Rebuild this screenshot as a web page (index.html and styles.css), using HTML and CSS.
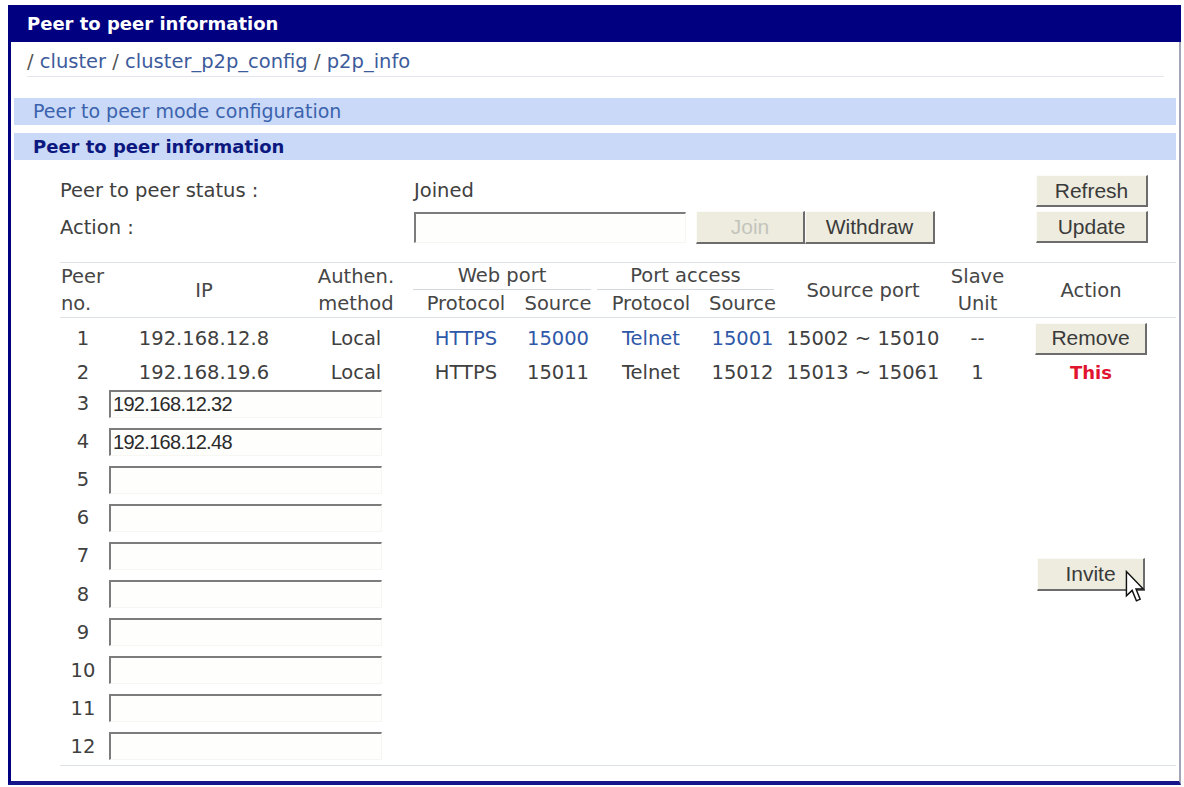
FILE: index.html
```html
<!DOCTYPE html>
<html lang="en">
<head>
  <meta charset="UTF-8">
  <meta name="viewport" content="width=device-width, initial-scale=1.0">
  <title>Peer to peer information</title>
  <link rel="stylesheet" href="styles.css">
</head>
<body>
  <div class="frame">
    <div class="titlebar">Peer to peer information</div>
    <div class="crumb">
      <span class="sep">/</span> <a href="#">cluster</a> <span class="sep">/</span> <a href="#">cluster_p2p_config</a> <span class="sep">/</span> <a href="#">p2p_info</a>
    </div>
    <div class="bar bar-link">Peer to peer mode configuration</div>
    <div class="bar bar-current">Peer to peer information</div>

    <div class="content">
      <div class="status">
        <div class="label">Peer to peer status :</div>
        <div class="value">Joined</div>
        <div class="side">
          <button class="btn side-btn">Refresh</button>
          <button class="btn side-btn">Update</button>
        </div>
        <div class="label">Action :</div>
        <div class="value action-row">
          <input type="text" class="field action-field">
          <button class="btn join" disabled>Join</button>
          <button class="btn withdraw">Withdraw</button>
        </div>
      </div>

      <table class="peers">
        <colgroup>
          <col class="c-no">
          <col class="c-ip">
          <col class="c-auth">
          <col class="c-wproto">
          <col class="c-wsrc">
          <col class="c-pproto">
          <col class="c-psrc">
          <col class="c-range">
          <col class="c-slave">
          <col class="c-action">
        </colgroup>
        <thead>
          <tr>
            <th rowspan="2" class="no-head">Peer<br>no.</th>
            <th rowspan="2">IP</th>
            <th rowspan="2">Authen.<br>method</th>
            <th colspan="2" class="group"><span>Web port</span></th>
            <th colspan="2" class="group"><span>Port access</span></th>
            <th rowspan="2">Source port</th>
            <th rowspan="2">Slave<br>Unit</th>
            <th rowspan="2">Action</th>
          </tr>
          <tr>
            <th>Protocol</th>
            <th>Source</th>
            <th>Protocol</th>
            <th>Source</th>
          </tr>
        </thead>
        <tbody>
          <tr class="row-first">
            <td>1</td>
            <td>192.168.12.8</td>
            <td>Local</td>
            <td class="hl">HTTPS</td>
            <td class="hl">15000</td>
            <td class="hl">Telnet</td>
            <td class="hl">15001</td>
            <td>15002 ~ 15010</td>
            <td>--</td>
            <td><button class="btn act-btn">Remove</button></td>
          </tr>
          <tr class="row-second">
            <td>2</td>
            <td>192.168.19.6</td>
            <td>Local</td>
            <td>HTTPS</td>
            <td>15011</td>
            <td>Telnet</td>
            <td>15012</td>
            <td>15013 ~ 15061</td>
            <td>1</td>
            <td class="this">This</td>
          </tr>
          <tr class="row-edit">
            <td>3</td>
            <td colspan="2" class="ip-cell"><input type="text" class="field" value="192.168.12.32"></td>
            <td colspan="6" rowspan="10"></td>
            <td rowspan="10">
              <span class="invite-wrap">
                <button class="btn act-btn invite">Invite</button>
                <svg class="cursor" viewBox="0 0 14 23" width="20" height="33">
                  <path d="M1 1 L1 18 L5 14.2 L8 21.5 L10.6 20.4 L7.7 13.3 L12.8 13.3 Z" fill="#fff" stroke="#111" stroke-width="1"/>
                </svg>
              </span>
            </td>
          </tr>
          <tr class="row-edit"><td>4</td><td colspan="2" class="ip-cell"><input type="text" class="field" value="192.168.12.48"></td></tr>
          <tr class="row-edit"><td>5</td><td colspan="2" class="ip-cell"><input type="text" class="field"></td></tr>
          <tr class="row-edit"><td>6</td><td colspan="2" class="ip-cell"><input type="text" class="field"></td></tr>
          <tr class="row-edit"><td>7</td><td colspan="2" class="ip-cell"><input type="text" class="field"></td></tr>
          <tr class="row-edit"><td>8</td><td colspan="2" class="ip-cell"><input type="text" class="field"></td></tr>
          <tr class="row-edit"><td>9</td><td colspan="2" class="ip-cell"><input type="text" class="field"></td></tr>
          <tr class="row-edit"><td>10</td><td colspan="2" class="ip-cell"><input type="text" class="field"></td></tr>
          <tr class="row-edit"><td>11</td><td colspan="2" class="ip-cell"><input type="text" class="field"></td></tr>
          <tr class="row-edit"><td>12</td><td colspan="2" class="ip-cell"><input type="text" class="field"></td></tr>
        </tbody>
      </table>
    </div>
  </div>
</body>
</html>
```

FILE: styles.css
```css
body {
  margin: 0;
  background: #fff;
  font-family: "DejaVu Sans", Verdana, sans-serif;
  font-size: 19.5px;
  color: #404040;
}
.frame {
  box-sizing: border-box;
  margin: 5px 0 0 8px;
  width: 1173px;
  height: 780px;
  border-left: 3px solid #000080;
  border-right: 2px solid #a4a4b8;
  border-bottom: 4px solid #16168a;
}
.titlebar {
  height: 37px;
  line-height: 37px;
  margin-right: -2px;
  padding-left: 16px;
  background: #000080;
  color: #fff;
  font-weight: 700;
  font-size: 18px;
}
.crumb {
  margin: 0 15px 0 16px;
  padding-top: 8px;
  padding-bottom: 2px;
  line-height: 24px;
  border-bottom: 1px solid #e3e6ea;
  color: #555;
}
.crumb a {
  color: #3d5b9c;
  text-decoration: none;
}
.bar {
  margin: 0 3px;
  height: 27px;
  line-height: 27px;
  padding-left: 19px;
  background: #cad9f7;
}
.bar-link {
  margin-top: 21px;
  font-size: 19px;
  color: #3b63ad;
}
.bar-current {
  margin-top: 8px;
  font-size: 18px;
  font-weight: 700;
  color: #0c1880;
}
.content {
  margin-left: 49px;
  width: 1116px;
}
.status {
  margin-top: 12px;
  display: grid;
  grid-template-columns: 354px 622px 112px;
  grid-template-rows: 37px 37px;
  align-items: center;
}
.side {
  grid-column: 3;
  grid-row: 1 / span 2;
  align-self: start;
  display: flex;
  flex-direction: column;
  gap: 4px;
  padding-top: 3px;
}
.action-row {
  display: flex;
  align-items: center;
}
.btn {
  box-sizing: border-box;
  height: 32px;
  padding: 0;
  font-family: "Liberation Sans", Arial, sans-serif;
  font-size: 21px;
  color: #3a3a3a;
  background: #edecdf;
  border: none;
  border-top: 1px solid #fbfbf7;
  border-left: 1px solid #fbfbf7;
  border-right: 2px solid #6c6c6c;
  border-bottom: 2px solid #6c6c6c;
}
.side-btn {
  width: 112px;
}
.join {
  width: 109px;
  height: 33px;
  margin-left: 10px;
  color: #c4c4bc;
}
.withdraw {
  width: 130px;
  height: 33px;
}
.field {
  box-sizing: border-box;
  width: 273px;
  height: 28px;
  padding: 0 2px;
  font-family: "Liberation Sans", Arial, sans-serif;
  font-size: 20px;
  letter-spacing: -0.7px;
  color: #2a2a2a;
  background: #fefefc;
  border-top: 2px solid #7c7c7c;
  border-left: 2px solid #7c7c7c;
  border-right: 1px solid #f6f6f2;
  border-bottom: 1px solid #f6f6f2;
  vertical-align: middle;
}
.action-field {
  width: 272px;
  height: 31px;
}
.peers {
  margin-top: 16px;
  width: 1116px;
  table-layout: fixed;
  border-collapse: collapse;
  border-top: 1px solid #dde1e8;
  border-bottom: 1px solid #dde1e8;
}
.c-no { width: 46px; }
.c-ip { width: 196px; }
.c-auth { width: 108px; }
.c-wproto { width: 112px; }
.c-wsrc { width: 72px; }
.c-pproto { width: 114px; }
.c-psrc { width: 69px; }
.c-range { width: 172px; }
.c-slave { width: 57px; }
.c-action { width: 170px; }
.peers thead {
  border-bottom: 1px solid #dde1e8;
}
.peers th {
  padding: 0;
  height: 27px;
  line-height: 27px;
  font-weight: normal;
  color: #464646;
  text-align: center;
}
.peers th.no-head {
  text-align: left;
  padding-left: 1px;
}
.peers th.group span {
  display: block;
  margin: 0 3px;
  line-height: 26px;
  border-bottom: 1px solid #d4d8e0;
}
.peers td {
  padding: 0;
  text-align: center;
  vertical-align: middle;
}
.row-first {
  height: 42px;
}
.row-second {
  height: 25px;
}
.row-edit {
  height: 38.1px;
}
.peers td.ip-cell {
  text-align: left;
  padding-left: 3px;
}
.hl {
  color: #2f58a8;
}
.this {
  font-weight: 700;
  font-size: 18px;
  color: #e0142e;
}
.act-btn {
  width: 112px;
}
.invite {
  width: 108px;
  height: 33px;
}
.invite-wrap {
  position: relative;
  display: inline-block;
  vertical-align: middle;
}
.cursor {
  position: absolute;
  left: 88px;
  top: 12px;
}
```
